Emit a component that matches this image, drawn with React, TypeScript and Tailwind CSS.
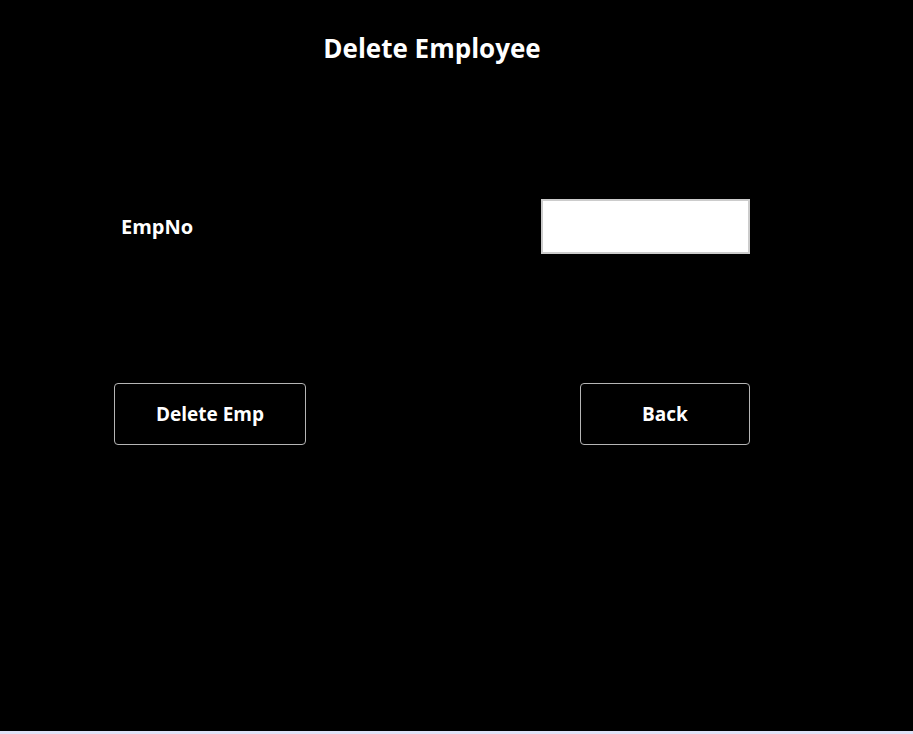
export default function App() {
  return (
    <div className="min-h-[734px] bg-[#e1e1f6]">
      <div className="h-[731px] bg-black font-['Open_Sans','Noto_Sans',sans-serif] text-white">
        <div className="flex w-[864px] justify-center pt-[30px]">
          <h1 className="text-[26px] font-bold leading-[36px]">Delete Employee</h1>
        </div>
        <div className="mt-[133px] flex items-center justify-between pl-[121px] pr-[163px]">
          <span className="text-[20px] font-bold leading-[24px]">EmpNo</span>
          <input
            type="text"
            className="h-[55px] w-[209px] border-2 border-[#cccccc] bg-white px-2 text-black outline-none"
          />
        </div>
        <div className="mt-[129px] flex justify-between pl-[114px] pr-[163px]">
          <button className="h-[62px] w-[192px] rounded-[4px] border border-[#b5b5b5] bg-black text-[19px] font-bold text-white">
            Delete Emp
          </button>
          <button className="h-[62px] w-[170px] rounded-[4px] border border-[#b5b5b5] bg-black text-[19px] font-bold text-white">
            Back
          </button>
        </div>
      </div>
    </div>
  );
}
